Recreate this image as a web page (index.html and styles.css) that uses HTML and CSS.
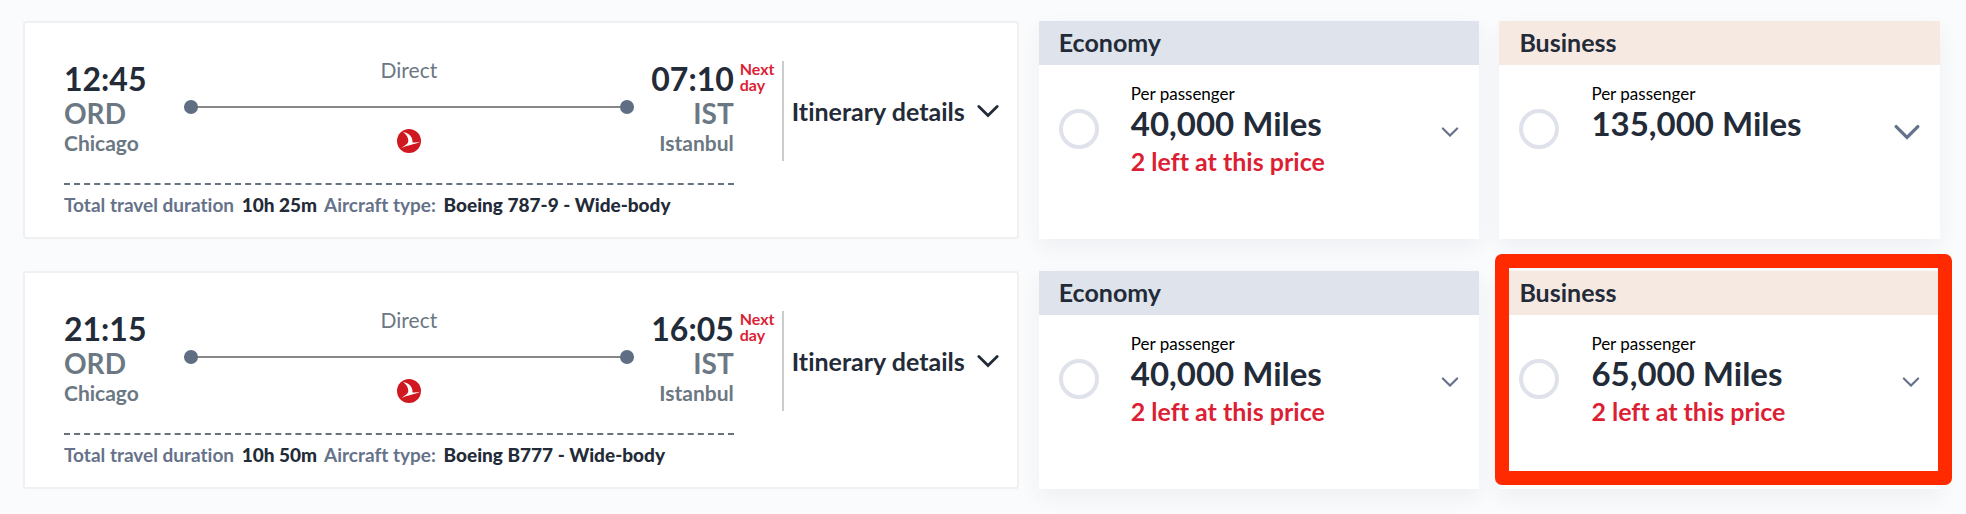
FILE: index.html
```
<!DOCTYPE html>
<html lang="en">
<head>
    <meta charset="UTF-8">
    <meta name="viewport" content="width=device-width, initial-scale=1.0">
    <title>Select flight</title>
    <link rel="stylesheet" href="styles.css">
</head>
<body>
    <svg class="sprite" aria-hidden="true">
        <symbol id="airline" viewBox="0 0 24 24">
            <circle cx="12" cy="12" r="12" fill="#cf1820"/>
            <path d="M6 3 C12 4 16 8 15.500 13.500 C18 13.800 20.500 13.500 23 12.800 C18 15.500 11 16 4.500 19 C8.500 16 11 15 11.300 12 C11.500 9 9.500 5.500 6 3 Z" fill="#fff"/>
        </symbol>
        <symbol id="chevron" viewBox="0 0 24 14">
            <path d="M2 2 L12 12 L22 2" fill="none" stroke="currentColor" stroke-width="3" stroke-linecap="round"/>
        </symbol>
    </svg>

    <main class="results">
        <article class="flight">
            <div class="trip">
                <div class="route">
                    <div class="endpoint">
                        <div class="time">12:45</div>
                        <div class="code">ORD</div>
                        <div class="city">Chicago</div>
                    </div>
                    <div class="path">
                        <div class="stops">Direct</div>
                        <div class="line"></div>
                        <svg class="airline"><use href="#airline"/></svg>
                    </div>
                    <div class="endpoint arrival">
                        <div class="time">07:10</div>
                        <div class="code">IST</div>
                        <div class="city">Istanbul</div>
                    </div>
                </div>
                <p class="info">Total travel duration <b>10h 25m</b> Aircraft type: <b>Boeing 787-9 - Wide-body</b></p>
            </div>
            <div class="next-day">Next day</div>
            <div class="details">
                <button class="details-btn" type="button">Itinerary details <svg class="chevron"><use href="#chevron"/></svg></button>
            </div>
        </article>

        <section class="fare">
            <h2 class="cabin economy">Economy</h2>
            <div class="fare-body">
                <input class="radio" type="radio" name="fare" id="fare1">
                <label class="price" for="fare1">
                    <span class="per">Per passenger</span>
                    <span class="miles">40,000 Miles</span>
                    <span class="left">2 left at this price</span>
                </label>
                <button class="toggle" type="button" aria-label="Show fares"><svg class="chevron small"><use href="#chevron"/></svg></button>
            </div>
        </section>

        <section class="fare">
            <h2 class="cabin business">Business</h2>
            <div class="fare-body">
                <input class="radio" type="radio" name="fare" id="fare2">
                <label class="price" for="fare2">
                    <span class="per">Per passenger</span>
                    <span class="miles">135,000 Miles</span>
                </label>
                <button class="toggle" type="button" aria-label="Show fares"><svg class="chevron large"><use href="#chevron"/></svg></button>
            </div>
        </section>

        <article class="flight">
            <div class="trip">
                <div class="route">
                    <div class="endpoint">
                        <div class="time">21:15</div>
                        <div class="code">ORD</div>
                        <div class="city">Chicago</div>
                    </div>
                    <div class="path">
                        <div class="stops">Direct</div>
                        <div class="line"></div>
                        <svg class="airline"><use href="#airline"/></svg>
                    </div>
                    <div class="endpoint arrival">
                        <div class="time">16:05</div>
                        <div class="code">IST</div>
                        <div class="city">Istanbul</div>
                    </div>
                </div>
                <p class="info">Total travel duration <b>10h 50m</b> Aircraft type: <b>Boeing B777 - Wide-body</b></p>
            </div>
            <div class="next-day">Next day</div>
            <div class="details">
                <button class="details-btn" type="button">Itinerary details <svg class="chevron"><use href="#chevron"/></svg></button>
            </div>
        </article>

        <section class="fare">
            <h2 class="cabin economy">Economy</h2>
            <div class="fare-body">
                <input class="radio" type="radio" name="fare" id="fare3">
                <label class="price" for="fare3">
                    <span class="per">Per passenger</span>
                    <span class="miles">40,000 Miles</span>
                    <span class="left">2 left at this price</span>
                </label>
                <button class="toggle" type="button" aria-label="Show fares"><svg class="chevron small"><use href="#chevron"/></svg></button>
            </div>
        </section>

        <section class="fare marked">
            <h2 class="cabin business">Business</h2>
            <div class="fare-body">
                <input class="radio" type="radio" name="fare" id="fare4">
                <label class="price" for="fare4">
                    <span class="per">Per passenger</span>
                    <span class="miles">65,000 Miles</span>
                    <span class="left">2 left at this price</span>
                </label>
                <button class="toggle" type="button" aria-label="Show fares"><svg class="chevron small"><use href="#chevron"/></svg></button>
            </div>
        </section>
    </main>
</body>
</html>
```
FILE: styles.css
```
* {
    box-sizing: border-box;
}
body {
    margin: 0;
    background: #fafbfd;
    font-family: Lato, "Open Sans", sans-serif;
    font-variant-ligatures: none;
    color: #232b38;
}
button {
    padding: 0;
    border: 0;
    background: none;
    font: inherit;
    font-variant-ligatures: none;
    color: inherit;
    cursor: pointer;
}
.sprite {
    display: none;
}
.results {
    display: grid;
    grid-template-columns: minmax(0, 2.26fr) minmax(0, 1fr) minmax(0, 1fr);
    gap: 32px 20px;
    padding: 21px 26px 24px 23px;
}

/* flight card */
.flight {
    display: flex;
    padding: 38px 0 20px 39px;
    background: #fff;
    border: 2px solid #f0f0f1;
    border-radius: 3px;
}
.trip {
    flex: 1;
}
.route {
    display: flex;
    height: 124px;
    border-bottom: 2px dashed #66727e;
}
.endpoint {
    width: 120px;
    color: #6b7883;
    font-weight: bold;
}
.arrival {
    width: 100px;
    text-align: right;
}
.time {
    color: #232b38;
    font-size: 32px;
    line-height: 36px;
}
.code {
    font-size: 28px;
    line-height: 32px;
}
.city {
    font-size: 21px;
    line-height: 28px;
}
.path {
    flex: 1;
    display: flex;
    flex-direction: column;
    align-items: center;
}
.stops {
    color: #6b7883;
    font-size: 21px;
    line-height: 18px;
}
.line {
    align-self: stretch;
    display: flex;
    justify-content: space-between;
    margin: 21px 0 15px;
    background: linear-gradient(#888, #888) center / 100% 2px no-repeat;
}
.line::before,
.line::after {
    content: "";
    width: 14px;
    height: 14px;
    border-radius: 50%;
    background: #5f6e82;
}
.airline {
    width: 24px;
    height: 24px;
}
.info {
    margin: 8px 0 0;
    color: #66728a;
    font-size: 19px;
    font-weight: bold;
    line-height: 24px;
}
.info b {
    margin: 0 3px;
    color: #232b38;
}
.next-day {
    width: 48px;
    padding-left: 6px;
    color: #dc1f35;
    font-size: 16px;
    font-weight: bold;
    line-height: 16px;
}
.details {
    display: flex;
    align-items: center;
    width: 235px;
    height: 100px;
    padding-left: 8px;
    border-left: 2px solid #ccc;
}
.details-btn {
    display: flex;
    align-items: center;
    gap: 12px;
    font-size: 25px;
    font-weight: bold;
}
.chevron {
    display: block;
    width: 22px;
    height: 14px;
}
.chevron.small {
    width: 18px;
    height: 10px;
}
.chevron.large {
    width: 26px;
    height: 16px;
}

/* fare card */
.fare {
    position: relative;
    background: #fff;
    box-shadow: 0 8px 20px rgba(40, 50, 60, 0.06);
}
.cabin {
    margin: 0;
    padding: 0 20px 2px;
    font-size: 25px;
    line-height: 42px;
}
.economy {
    background: #dfe3ec;
}
.business {
    background: #f6e9e2;
}
.fare-body {
    display: flex;
    align-items: flex-start;
    gap: 32px;
    padding: 20px 20px 0;
}
.radio {
    appearance: none;
    width: 40px;
    height: 40px;
    margin: 24px 0 0;
    border: 4px solid #dfe2ea;
    border-radius: 50%;
    background: #fff;
}
.price {
    flex: 1;
    display: flex;
    flex-direction: column;
}
.per {
    color: #000;
    font-size: 17px;
    line-height: 18px;
}
.miles {
    font-size: 33px;
    font-weight: bold;
    line-height: 40px;
}
.left {
    color: #dc1f35;
    font-size: 25px;
    font-weight: bold;
    line-height: 36px;
}
.toggle {
    display: flex;
    align-items: center;
    height: 16px;
    margin-top: 39px;
    color: #66728a;
}

/* highlight frame */
.marked::after {
    content: "";
    position: absolute;
    top: -17px;
    right: -12px;
    bottom: 4px;
    left: -4px;
    border: 14px solid #ff2a00;
    border-radius: 7px;
    pointer-events: none;
}
```
